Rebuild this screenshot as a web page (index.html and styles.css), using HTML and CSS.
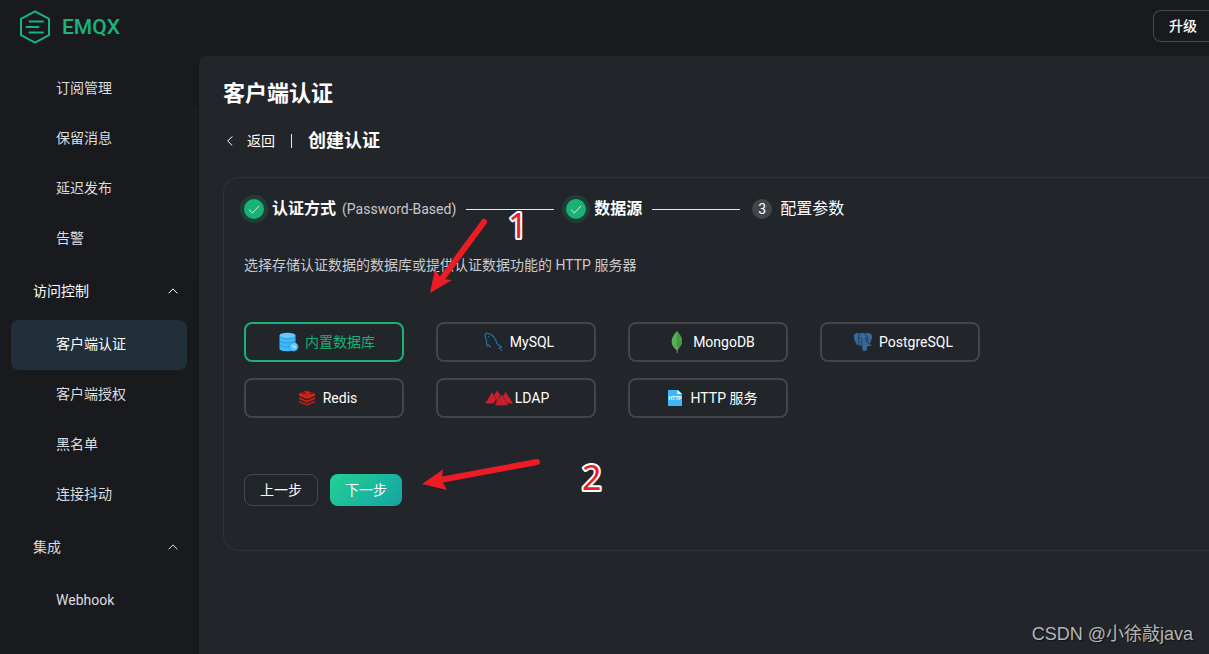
FILE: index.html
```html
<!DOCTYPE html>
<html lang="zh-CN">
<head>
    <meta charset="UTF-8">
    <meta name="viewport" content="width=device-width, initial-scale=1.0">
    <title>EMQX Dashboard</title>
    <link rel="stylesheet" href="styles.css">
</head>
<body>
    <header class="main-header">
        <a class="logo" href="#">
            <svg class="logo-icon" viewBox="0 0 32 34" fill="none" stroke="#19b37b" stroke-width="2">
                <path d="M16 1.3 30 8.8v16.4L16 32.7 2 25.200V8.8z" stroke-linejoin="round"/>
                <path d="M10.500 11.500h13.500M7.500 17h12M10.500 22.500h13.500" stroke-linecap="round"/>
            </svg>
            <span>EMQX</span>
        </a>
        <button class="upgrade" type="button">升级</button>
    </header>

    <div class="layout">
        <nav class="sidebar">
            <a href="#">订阅管理</a>
            <a href="#">保留消息</a>
            <a href="#">延迟发布</a>
            <a href="#">告警</a>
            <button class="group active" type="button">访问控制
                <svg viewBox="0 0 10 6"><path d="M.7 5.3 5 .9l4.3 4.4"/></svg>
            </button>
            <a class="selected" href="#">客户端认证</a>
            <a href="#">客户端授权</a>
            <a href="#">黑名单</a>
            <a href="#">连接抖动</a>
            <button class="group" type="button">集成
                <svg viewBox="0 0 10 6"><path d="M.7 5.3 5 .9l4.3 4.4"/></svg>
            </button>
            <a href="#">Webhook</a>
            <span class="scroll-thumb"></span>
        </nav>

        <main class="content">
            <h1>客户端认证</h1>
            <div class="page-nav">
                <a href="#">
                    <svg viewBox="0 0 6 10"><path d="M5.3.4.7 5l4.600 4.600"/></svg>
                    返回
                </a>
                <span class="divider"></span>
                <h2>创建认证</h2>
            </div>

            <section class="card">
                <div class="steps">
                    <span class="step-icon done"><svg viewBox="0 0 12 9"><path d="M1 4.7 4.4 8 11 1"/></svg></span>
                    <strong>认证方式</strong>
                    <span class="step-note">(Password-Based)</span>
                    <span class="step-line"></span>
                    <span class="step-icon done"><svg viewBox="0 0 12 9"><path d="M1 4.7 4.4 8 11 1"/></svg></span>
                    <strong>数据源</strong>
                    <span class="step-line"></span>
                    <span class="step-icon">3</span>
                    <span class="step-title">配置参数</span>
                </div>

                <p class="desc">选择存储认证数据的数据库或提供认证数据功能的 HTTP 服务器</p>

                <div class="sources">
                    <label class="source">
                        <input type="radio" name="source" value="built-in" checked>
                        <svg viewBox="0 0 32 32">
                            <path d="M6.500 9.500v13.500c0 3 16 3 16 0V9.500z" fill="#3fb8fc"/>
                            <ellipse cx="14.500" cy="9.500" rx="8" ry="2.700" fill="#62c9ff"/>
                            <path d="M6.500 10.200c1 3.300 15 3.300 16 0M6.500 14.400c1 3.300 15 3.300 16 0M6.500 18.600c1 3.300 15 3.300 16 0" fill="none" stroke="#1b7fbe" stroke-width=".5"/>
                            <circle cx="20.800" cy="20.800" r="4.300" fill="#62c9ff" stroke="#258bca" stroke-width=".7"/>
                            <path d="m19.400 19.200 1.600 1.700 1.900.2" fill="none" stroke="#fff"/>
                        </svg>
                        <span>内置数据库</span>
                    </label>
                    <label class="source">
                        <input type="radio" name="source" value="mysql">
                        <svg viewBox="0 0 32 32" fill="none" stroke="#1c79aa" stroke-width="1.100" stroke-linejoin="round">
                            <path d="M10.500 18.800 9.400 20c-1-1.500-.7-3.200-.8-4.800-.2-2-1.800-4.300-1.500-6.700 0-1.500 1.500-1.700 2.800-1 1 .4 1.600.1 2.700.8 3.600 2 5.300 5.700 6.400 9.200.8 1.500 3.600 2.300 4.600 3.800-1.200.1-2.300.2-2.600 1 1 .6 2.700 1.400 3.200 2.500"/>
                            <path d="M10.500 18.800c.6.300.9 1.300 1.400 2l.9-.8M10.300 10l.8 1.500"/>
                        </svg>
                        <span>MySQL</span>
                    </label>
                    <label class="source">
                        <input type="radio" name="source" value="mongodb">
                        <svg viewBox="0 0 32 32">
                            <path d="M15.800 5c4.500 5 5.900 8 5 12-.6 2.900-2.600 5-5 7-3-2-5-4.600-5.200-8-.2-4 2.500-7.500 5.200-11z" fill="#58b055"/>
                            <path d="M15.800 5c4.500 5 5.900 8 5 12-.6 2.900-2.600 5-5 7z" fill="#439a43"/>
                            <path d="m15.600 21 .8 0 .2 6h-.8z" fill="#b8ad91"/>
                        </svg>
                        <span>MongoDB</span>
                    </label>
                    <label class="source">
                        <input type="radio" name="source" value="postgresql">
                        <svg viewBox="0 0 32 32">
                            <path d="M7 9c.8-2.300 4.300-2.400 6-1.600 2-.8 3.500-.7 5 0 2-.7 5.600-.7 6.700 1.600 1 2.600-.6 6.500-2.300 9.500.8.300 1.700.1 2.400 0-.7 1.700-2.700 2-4.600 1.800l-.4 3.800c-.7 1.500-3.700 1.500-4.300 0L15 19.500c-1 .5-2.600.2-3.300-.5-1 .6-2-.2-2.600-1.500C7.600 14.500 6.200 11.300 7 9z" fill="#34699a"/>
                            <path d="M13 7.500c-1.600 1.900-1.900 4.500-1.500 7.300l.5 2.300-.5 1.700M18 7.500c1.500 1.500 2.600 3.500 2.900 6.500l-.2 2.500 1.500 2M12 12.500c1-.8 2.200-.6 2.700.2.500 2-.7 3.500.4 5v1.700M20.700 12c-.8-.6-2-.4-2.200.3 0 1.400 1 2.600 1.300 4" fill="none" stroke="#22272d" stroke-width=".7"/>
                        </svg>
                        <span>PostgreSQL</span>
                    </label>
                    <label class="source">
                        <input type="radio" name="source" value="redis">
                        <svg viewBox="0 0 32 32">
                            <path d="m8 18.600 8 3.200 8-3.200v1.900l-8 3.300-8-3.300z" fill="#b51b16"/>
                            <path d="m8 15.200 8 3.200 8-3.200v1.900l-8 3.300-8-3.300z" fill="#cf211a"/>
                            <path d="m8 11.700 8-3.200 8 3.200v2l-8 3.200-8-3.200z" fill="#d8221b"/>
                            <path d="m11 11.300 2.200-.9 2.200.8-2.300.9zM15.500 9.400l1.500.6 1.500-.6M14.500 13.800l3.500-.8M18.500 11.400l2-.7 1.500.8-2 .7z" fill="#5d1817" stroke="#5d1817" stroke-width=".5"/>
                        </svg>
                        <span>Redis</span>
                    </label>
                    <label class="source">
                        <input type="radio" name="source" value="ldap">
                        <svg viewBox="0 0 32 32" fill="#c9202d" stroke="#22252a" stroke-width=".4">
                            <path d="m10.500 13.500 3.800-5.500 3.200 5-3.500 8z"/>
                            <path d="m2 21.700 7-11.700 4.500 7-3 4.700z"/>
                            <path d="m19 15 3.800-5.500 7.500 12.200h-7z"/>
                            <path d="m11.500 23.500 7-11.500 6.700 11.500z"/>
                        </svg>
                        <span>LDAP</span>
                    </label>
                    <label class="source">
                        <input type="radio" name="source" value="http">
                        <svg viewBox="0 0 32 32">
                            <path d="M9 8h10l4 4v12H9z" fill="#3eb6fb"/>
                            <path d="M18.500 8v4H23z" fill="#fff"/>
                            <text x="16" y="18" class="http-label">HTTP</text>
                        </svg>
                        <span>HTTP 服务</span>
                    </label>
                </div>

                <div class="actions">
                    <button class="prev" type="button">上一步</button>
                    <button class="next" type="button">下一步</button>
                </div>
            </section>
        </main>
    </div>

    <!-- Tutorial marks over the page -->
    <svg class="marks" width="640" height="520" viewBox="0 0 640 520">
        <g fill="#ed1c24" stroke="#ed1c24">
            <path d="M484 222 441 280" stroke-width="6" stroke-linecap="round"/>
            <path d="m430 293 5-24 5 8 3 2 9 1z" stroke="none"/>
            <path d="M537 462 440 480" stroke-width="6" stroke-linecap="round"/>
            <path d="m422 484 21-14.500-1 8 1 5 4 7.500z" stroke="none"/>
        </g>
        <text x="508" y="238">1</text>
        <text x="582" y="490">2</text>
    </svg>
    <div class="watermark">CSDN @小徐敲java</div>
</body>
</html>
```

FILE: styles.css
```css
* { margin: 0; padding: 0; box-sizing: border-box; }
body { height: 100vh; display: flex; flex-direction: column; overflow: hidden; background-color: #191a1d; color: #fff; font-family: Roboto, "Noto Sans CJK SC", sans-serif; font-size: 14px; line-height: 20px; }
button { font: inherit; color: inherit; background: none; border: none; cursor: pointer; }
a { color: inherit; text-decoration: none; }
h1 { font-size: 22px; line-height: 32px; }
h2 { font-size: 18px; line-height: 24px; }

/* Header */
.main-header { height: 56px; display: flex; justify-content: space-between; align-items: center; padding: 0 0 4px 19px; }
.logo { display: flex; align-items: center; gap: 11px; padding-top: 2px; color: #19b37b; font-size: 21px; font-weight: 500; }
.logo-icon { width: 32px; height: 34px; }
.upgrade { height: 32px; padding: 0 12px 0 15px; border: 1px solid #46494f; border-right: none; border-radius: 8px 0 0 8px; font-weight: 500; }

/* Sidebar */
.layout { flex: 1; display: flex; min-height: 0; }
.sidebar { position: relative; width: 199px; flex: none; padding: 8px 12px 0 11px; color: #dcdde0; }
.sidebar a { display: flex; align-items: center; height: 50px; padding: 0 0 2px 45px; border-radius: 8px; }
.sidebar .selected { background-color: #212f3b; color: #fff; }
.group { display: flex; align-items: center; justify-content: space-between; width: 100%; height: 56px; padding: 0 9px 2px 22px; }
.group.active { color: #fff; }
.group svg { width: 10px; height: 6px; fill: none; stroke: currentColor; }
.scroll-thumb { position: absolute; top: 50px; right: 2px; width: 6px; height: 168px; border-radius: 3px; background-color: #1c1d20; }

/* Content */
.content { flex: 1; padding: 22px 0 0 24px; background-color: #22252a; border-top-left-radius: 8px; }
.page-nav { display: flex; align-items: center; gap: 16px; margin: 19px 0 24px; }
.page-nav a { display: flex; align-items: center; gap: 14px; padding-left: 4px; }
.page-nav svg { width: 6px; height: 10px; fill: none; stroke: currentColor; }
.divider { width: 1px; height: 14px; background-color: #e6e7e9; }
.card { padding: 20px; padding-bottom: 44px; border: 1px solid #303338; border-right: none; border-radius: 16px 0 0 16px; }

.steps { display: flex; align-items: center; height: 22px; font-size: 16px; }
.steps strong, .step-title { margin-left: 8px; }
.step-icon { display: flex; align-items: center; justify-content: center; width: 20px; height: 20px; border-radius: 50%; background-color: #42454c; font-size: 14px; }
.step-icon.done { background-color: #19b276; box-shadow: 0 0 0 4px #203e37; }
.step-icon svg { width: 12px; height: 9px; fill: none; stroke: #d8f3e8; }
.step-note { margin-left: 6px; color: #c6c8cc; font-size: 14px; }
.step-line { width: 88px; height: 1px; margin: 0 12px 0 10px; background-color: #e6e7e9; }
.desc { margin-top: 35px; color: #c9cbcf; }

.sources { display: grid; grid-template-columns: repeat(auto-fill, 160px); gap: 16px 32px; max-width: 800px; margin-top: 47px; }
.source { display: flex; align-items: center; justify-content: center; height: 40px; border: 2px solid #42454a; border-radius: 8px; cursor: pointer; }
.source input { appearance: none; position: absolute; }
.source svg { width: 32px; height: 32px; }
.source:has(input:checked) { border-color: #19b276; color: #19b276; }
.http-label { fill: #fff; font-size: 5px; font-weight: 700; text-anchor: middle; }

.actions { display: flex; gap: 12px; margin-top: 56px; }
.actions button { height: 32px; padding: 0 15px; border-radius: 8px; }
.actions .prev { border: 1px solid #46494f; }
.actions .next { background: linear-gradient(135deg, #23d194, #15a3a5); }

/* Marks and watermark */
.marks { position: absolute; top: 0; left: 0; pointer-events: none; }
.marks text { fill: #ed1c24; stroke: #fff; stroke-width: 4px; stroke-linejoin: round; paint-order: stroke; font-family: "Noto Sans", sans-serif; font-size: 34px; }
.watermark { position: absolute; right: 16px; bottom: 8px; color: #b4b5b7; font-family: "Liberation Sans", "Noto Sans CJK SC", sans-serif; font-size: 18px; line-height: 24px; text-shadow: 1px 1px 1px #111; }
```
